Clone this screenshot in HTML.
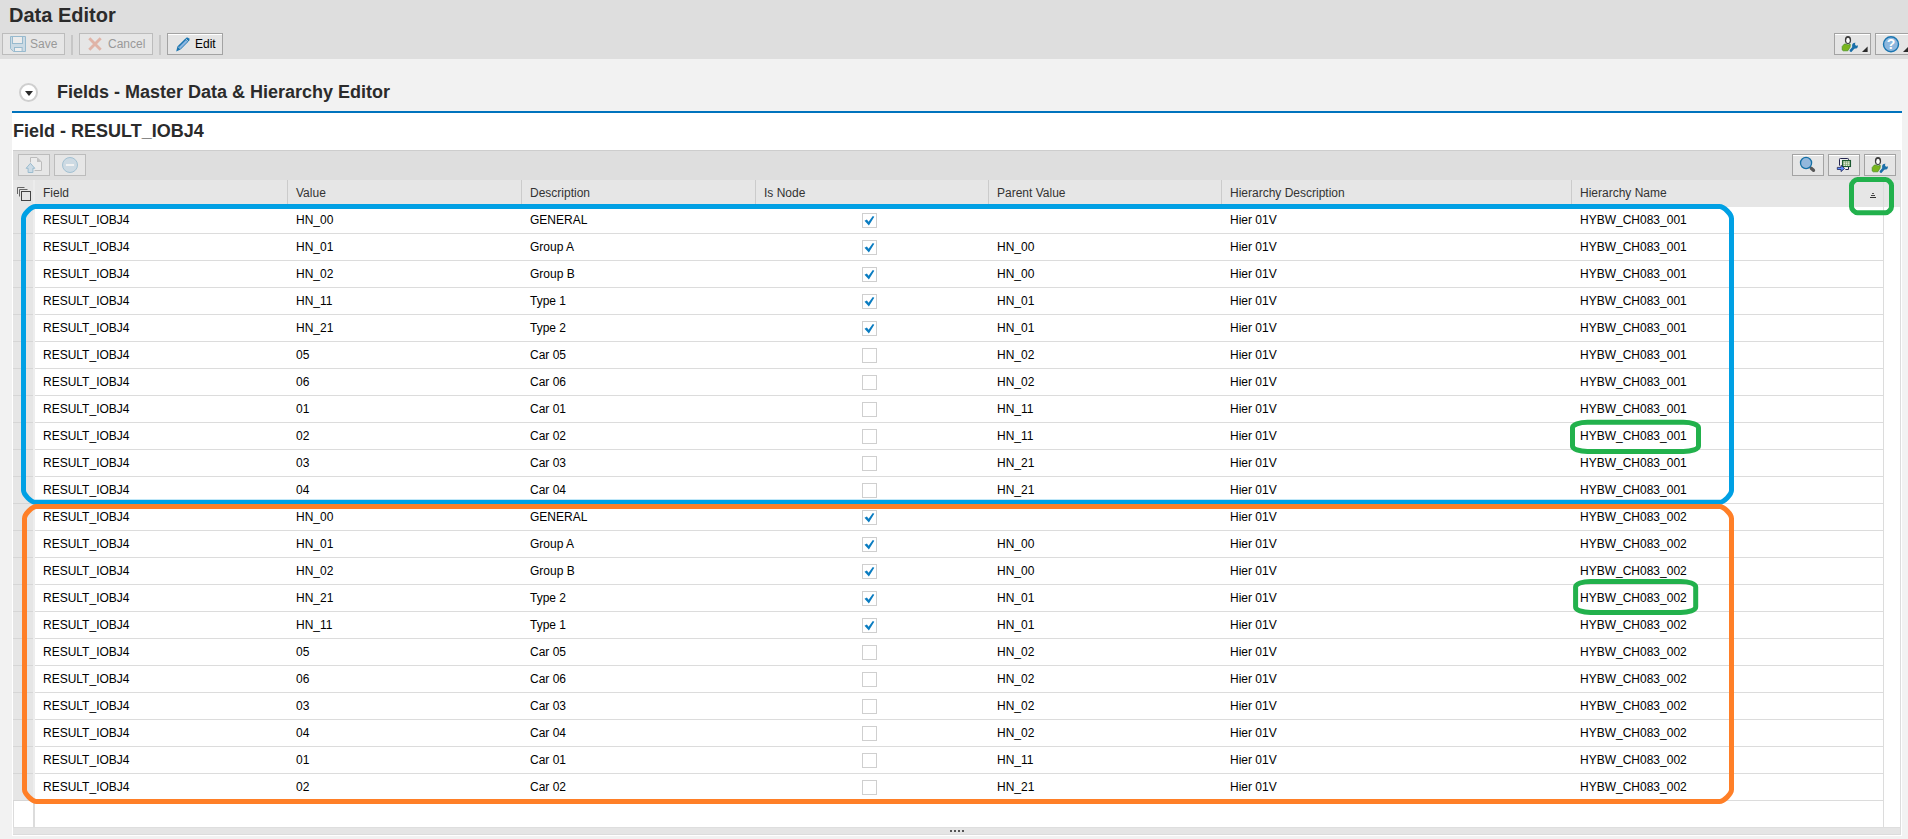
<!DOCTYPE html>
<html lang="en">
<head>
<meta charset="utf-8">
<title>Data Editor</title>
<style>
*{box-sizing:border-box;margin:0;padding:0}
html,body{width:1908px;height:839px;overflow:hidden;background:#f2f2f2;font-family:"Liberation Sans",Arial,sans-serif;font-size:12px;color:#000}
.abs{position:absolute}
#top{position:absolute;left:0;top:0;width:1908px;height:59px;background:#dedede}
#ttl{position:absolute;left:9px;top:3px;font-size:20px;font-weight:bold;color:#2b2b2b;line-height:24px;white-space:nowrap}
.btn{position:absolute;height:22px;border:1px solid #bcbcbc;background:#e6e6e6;font-size:12px;line-height:20px;white-space:nowrap;color:#999}
.btn.en{color:#000;background:#e5e5e5;border-color:#a3a3a3;box-shadow:inset 0 1px 0 #fff}
.btn svg{position:absolute;overflow:visible}
.sep{position:absolute;top:35px;width:2px;height:20px;background:#c6c6c6}
#sec{position:absolute;left:57px;top:81px;font-size:18px;font-weight:bold;color:#2b2b2b;line-height:22px;white-space:nowrap}
#circ{position:absolute;left:19px;top:83px;width:19px;height:19px;border-radius:50%;border:2px solid #cfcfcf;background:#fff}
#circ:after{content:"";position:absolute;left:3.5px;top:6px;border-left:4.5px solid transparent;border-right:4.5px solid transparent;border-top:5px solid #2b2b2b}
#bl{position:absolute;left:12px;top:111px;width:1890px;height:2px;background:#0073bd}
#panel{position:absolute;left:12px;top:113px;width:1890px;height:723px;background:#fff}
#sub{position:absolute;left:13px;top:120px;font-size:18px;font-weight:bold;color:#2b2b2b;line-height:22px;white-space:nowrap}
#tb{position:absolute;left:13px;top:150px;width:1888px;height:30px;background:#dedede;border-top:1px solid #cdcdcd}
#hd{position:absolute;left:13px;top:180px;width:1888px;height:27px;background:#e6e6e6}
#hd b{position:absolute;top:0;height:27px;line-height:26px;font-weight:normal;color:#333;padding-left:8px;border-left:1px solid #cbcbcb;white-space:nowrap}
#rows{position:absolute;left:13px;top:207px;width:1871px}
.r{position:relative;height:27px;border-bottom:1px solid #dcdcdc;background:#fff}
.r .s{position:absolute;left:0;top:0;width:20px;height:27px;background:#e6e6e6;border-right:0;border-bottom:1px solid #d6d6d6}
.r .s:after{content:"";position:absolute;left:20px;top:0;width:2px;height:27px;background:#ededed}
.c{position:absolute;top:0;height:26px;line-height:26px;font-weight:normal;white-space:nowrap;padding-left:9px}
.c1{left:21px}.c2{left:274px}.c3{left:508px}.c4{left:742px;width:233px;padding:0}.c5{left:975px}.c6{left:1208px}.c7{left:1558px}
.cb{position:absolute;left:107px;top:6px;width:15px;height:15px;border:1px solid #cfcfcf;background:#fff}
.cb svg{position:absolute;left:0;top:0}
#vline{position:absolute;left:1883px;top:180px;width:1px;height:647px;background:#dcdcdc}
#hstrip{position:absolute;left:33px;top:180px;width:2px;height:27px;background:#ececec}
#rb{position:absolute;left:1900px;top:150px;width:1px;height:685px;background:#dcdcdc}
#hs{position:absolute;left:13px;top:827px;width:1888px;height:8px;background:#e5e5e5;border-top:1px solid #dedede;border-bottom:1px solid #dcdcdc}
#dots{position:absolute;left:950px;top:830px;width:14px;height:2px;background:linear-gradient(90deg,#555 0,#555 2px,transparent 2px,transparent 4px,#555 4px,#555 6px,transparent 6px,transparent 8px,#555 8px,#555 10px,transparent 10px,transparent 12px,#555 12px,#555 14px)}
.r.e .s{background:#fff;border:0;border-left:1px solid #dcdcdc}
.r.e .s:after{background:#dcdcdc;left:19px}
</style>
</head>
<body>
<div id="top"></div>
<div id="ttl">Data Editor</div>
<div class="btn" style="left:2px;top:33px;width:63px;padding-left:27px"><svg style="left:7px;top:2px" width="16" height="16" viewBox="0 0 16 16"><path d="M0.5 0.5 H15.5 V15.5 H3.4 L0.5 12.6 Z" fill="#cbdae4" stroke="#98bace"/><rect x="2.5" y="0.5" width="10" height="7" fill="#ececec" stroke="#98bace"/><rect x="4.5" y="11.5" width="7.6" height="4" fill="#efefef" stroke="#98bace"/></svg>Save</div>
<div class="sep" style="left:71px"></div>
<div class="btn" style="left:79px;top:33px;width:74px;padding-left:28px"><svg style="left:8px;top:3px" width="14" height="14" viewBox="0 0 14 14"><path d="M1.3 1.3 L12.7 12.7 M12.7 1.3 L1.3 12.7" stroke="#e0b4a7" stroke-width="2.9" fill="none"/></svg>Cancel</div>
<div class="sep" style="left:159px"></div>
<div class="btn en" style="left:167px;top:33px;width:56px;padding-left:27px"><svg style="left:7px;top:2px" width="16" height="16" viewBox="0 0 16 16"><path d="M1.2 15.4 L2.4 10.6 L11.2 1.8 Q12.4 0.8 13.8 2.2 Q15.2 3.6 14.2 4.8 L5.6 13.6 Z" fill="#1a75b0"/><path d="M4 11 L11 4 L12.6 5.6 L5.6 12.6 Z" fill="#8db7e2"/><path d="M2.8 10.4 L5.8 13.4 M10.6 2.6 L13.6 5.6" stroke="#e5e5e5" stroke-width="0.7"/></svg>Edit</div>
<div class="btn en" style="left:1834px;top:33px;width:37px"><svg style="left:6px;top:1px" width="18" height="18" viewBox="0 0 18 18"><g>
<ellipse cx="7" cy="5" rx="3.1" ry="4" fill="#3a3a3a"/>
<ellipse cx="7" cy="5.4" rx="1.8" ry="2.55" fill="#fff"/>
<path d="M3.4 9 L1.2 11.5 V14.9 L2.2 15.8 H6.8 L9.1 12.1 L9.3 9.3 L7.1 9.9 L4.6 9 Z" fill="#7ab51d" stroke="#438f1e" stroke-width="0.7" stroke-linejoin="round"/>
<path d="M9.9 15.6 L13 12.2" stroke="#1a6fa8" stroke-width="2.6" stroke-linecap="round" fill="none"/>
<circle cx="14" cy="10.7" r="2.9" fill="#1a6fa8"/><circle cx="15.7" cy="9" r="1.75" fill="#e5e5e5"/>
</g></svg><svg style="left:26.6px;top:12.2px" width="6" height="6" viewBox="0 0 6 6"><path d="M0 6 H5.6 V0.4 Z" fill="#2b2b2b"/></svg></div>
<div class="btn en" style="left:1875px;top:33px;width:37px"><svg style="left:6px;top:1px" width="18" height="18" viewBox="0 0 18 18"><circle cx="9" cy="9.2" r="7.5" fill="#8db7de" stroke="#1a75b0" stroke-width="1.4"/><text x="9" y="13.5" text-anchor="middle" font-family="Liberation Sans, sans-serif" font-weight="bold" font-size="14" fill="#fff">?</text></svg><svg style="left:26.8px;top:12.2px" width="6" height="6" viewBox="0 0 6 6"><path d="M0 6 H6 V0 Z" fill="#2b2b2b"/></svg></div>
<div id="circ"></div>
<div id="sec">Fields - Master Data &amp; Hierarchy Editor</div>
<div id="bl"></div>
<div id="panel"></div>
<div id="sub">Field - RESULT_IOBJ4</div>
<div id="tb"></div>
<div class="btn" style="left:18px;top:154px;width:32px"><svg style="left:6px;top:2px" width="18" height="17" viewBox="0 0 18 17"><path d="M5.5 5.4 V0.5 H12 L16.5 5 V13.5 H9.6" fill="#ececec" stroke="#bcbcbc" stroke-width="1" stroke-linejoin="miter"/><path d="M12 0.5 V5 H16.5 Z" fill="#c2c2c2"/><path d="M5.45 6.3 L9.8 11.3 H7.9 V15.5 H3.1 V11.3 H1.1 Z" fill="#cddbe5" stroke="#94b8cc" stroke-width="0.9"/></svg></div>
<div class="btn" style="left:54px;top:154px;width:32px"><svg style="left:7px;top:2px" width="17" height="17" viewBox="0 0 17 17"><circle cx="8" cy="8" r="7.5" fill="#cddae3" stroke="#a3c1d2"/><rect x="3.9" y="7" width="8.2" height="2" fill="#f2f2f2"/></svg></div>
<div class="btn en" style="left:1792px;top:154px;width:32px"><svg style="left:6px;top:1px" width="18" height="18" viewBox="0 0 18 18"><path d="M12.2 12.2 L14.5 14.3" stroke="#585858" stroke-width="3.3" stroke-linecap="round"/><circle cx="7.05" cy="7" r="5.55" fill="#93b8dc" stroke="#1570a6" stroke-width="1.3"/></svg></div>
<div class="btn en" style="left:1828px;top:154px;width:32px"><svg style="left:7px;top:2px" width="18" height="18" viewBox="0 0 18 18"><path d="M3.5 8.6 V2.3 Q3.5 1.5 4.3 1.5 H11.7 Q12.5 1.5 12.5 2.3 V12.5 H9.4" fill="#f6f6f6" stroke="#25254f" stroke-width="1"/><rect x="6.5" y="3.5" width="8" height="6" fill="#7fa870" stroke="#1c5a32" stroke-width="1.1"/><path d="M7.6 5 H9.2 M9.9 5 H11.2 M11.9 5 H13.4 M7.6 6.7 H9.2 M9.9 6.7 H11.2 M11.9 6.7 H13.4 M7.6 8.3 H9.2 M9.9 8.3 H11.2 M11.9 8.3 H13.4" stroke="#fff" stroke-width="0.9"/><path d="M1.3 10.4 H5 V8.3 L8.6 11.4 L5 14.6 V12.5 H1.3 Z" fill="#5f8fff" stroke="#1e2355" stroke-width="0.8" stroke-linejoin="round"/></svg></div>
<div class="btn en" style="left:1864px;top:154px;width:32px"><svg style="left:6px;top:1px" width="18" height="18" viewBox="0 0 18 18"><g>
<ellipse cx="7" cy="5" rx="3.1" ry="4" fill="#3a3a3a"/>
<ellipse cx="7" cy="5.4" rx="1.8" ry="2.55" fill="#fff"/>
<path d="M3.4 9 L1.2 11.5 V14.9 L2.2 15.8 H6.8 L9.1 12.1 L9.3 9.3 L7.1 9.9 L4.6 9 Z" fill="#7ab51d" stroke="#438f1e" stroke-width="0.7" stroke-linejoin="round"/>
<path d="M9.9 15.6 L13 12.2" stroke="#1a6fa8" stroke-width="2.6" stroke-linecap="round" fill="none"/>
<circle cx="14" cy="10.7" r="2.9" fill="#1a6fa8"/><circle cx="15.7" cy="9" r="1.75" fill="#e5e5e5"/>
</g></svg></div>
<div id="hd">
<b style="left:21px;border-left:0;padding-left:9px">Field</b><b style="left:274px">Value</b><b style="left:508px">Description</b><b style="left:742px">Is Node</b><b style="left:975px">Parent Value</b><b style="left:1208px">Hierarchy Description</b><b style="left:1558px">Hierarchy Name</b>
</div>
<div id="rows">
<div class="r"><i class="s"></i><b class="c c1">RESULT_IOBJ4</b><b class="c c2">HN_00</b><b class="c c3">GENERAL</b><b class="c c4"><span class="cb on"><svg viewBox="0 0 13 13" width="13" height="13"><path d="M1.5 6.8 L3.9 5.4 L5.6 7.8 L9.8 2 L11.3 2.8 L5.9 11.5 Z" fill="#0a7cc1"/></svg></span></b><b class="c c5"></b><b class="c c6">Hier 01V</b><b class="c c7">HYBW_CH083_001</b></div>
<div class="r"><i class="s"></i><b class="c c1">RESULT_IOBJ4</b><b class="c c2">HN_01</b><b class="c c3">Group A</b><b class="c c4"><span class="cb on"><svg viewBox="0 0 13 13" width="13" height="13"><path d="M1.5 6.8 L3.9 5.4 L5.6 7.8 L9.8 2 L11.3 2.8 L5.9 11.5 Z" fill="#0a7cc1"/></svg></span></b><b class="c c5">HN_00</b><b class="c c6">Hier 01V</b><b class="c c7">HYBW_CH083_001</b></div>
<div class="r"><i class="s"></i><b class="c c1">RESULT_IOBJ4</b><b class="c c2">HN_02</b><b class="c c3">Group B</b><b class="c c4"><span class="cb on"><svg viewBox="0 0 13 13" width="13" height="13"><path d="M1.5 6.8 L3.9 5.4 L5.6 7.8 L9.8 2 L11.3 2.8 L5.9 11.5 Z" fill="#0a7cc1"/></svg></span></b><b class="c c5">HN_00</b><b class="c c6">Hier 01V</b><b class="c c7">HYBW_CH083_001</b></div>
<div class="r"><i class="s"></i><b class="c c1">RESULT_IOBJ4</b><b class="c c2">HN_11</b><b class="c c3">Type 1</b><b class="c c4"><span class="cb on"><svg viewBox="0 0 13 13" width="13" height="13"><path d="M1.5 6.8 L3.9 5.4 L5.6 7.8 L9.8 2 L11.3 2.8 L5.9 11.5 Z" fill="#0a7cc1"/></svg></span></b><b class="c c5">HN_01</b><b class="c c6">Hier 01V</b><b class="c c7">HYBW_CH083_001</b></div>
<div class="r"><i class="s"></i><b class="c c1">RESULT_IOBJ4</b><b class="c c2">HN_21</b><b class="c c3">Type 2</b><b class="c c4"><span class="cb on"><svg viewBox="0 0 13 13" width="13" height="13"><path d="M1.5 6.8 L3.9 5.4 L5.6 7.8 L9.8 2 L11.3 2.8 L5.9 11.5 Z" fill="#0a7cc1"/></svg></span></b><b class="c c5">HN_01</b><b class="c c6">Hier 01V</b><b class="c c7">HYBW_CH083_001</b></div>
<div class="r"><i class="s"></i><b class="c c1">RESULT_IOBJ4</b><b class="c c2">05</b><b class="c c3">Car 05</b><b class="c c4"><span class="cb"></span></b><b class="c c5">HN_02</b><b class="c c6">Hier 01V</b><b class="c c7">HYBW_CH083_001</b></div>
<div class="r"><i class="s"></i><b class="c c1">RESULT_IOBJ4</b><b class="c c2">06</b><b class="c c3">Car 06</b><b class="c c4"><span class="cb"></span></b><b class="c c5">HN_02</b><b class="c c6">Hier 01V</b><b class="c c7">HYBW_CH083_001</b></div>
<div class="r"><i class="s"></i><b class="c c1">RESULT_IOBJ4</b><b class="c c2">01</b><b class="c c3">Car 01</b><b class="c c4"><span class="cb"></span></b><b class="c c5">HN_11</b><b class="c c6">Hier 01V</b><b class="c c7">HYBW_CH083_001</b></div>
<div class="r"><i class="s"></i><b class="c c1">RESULT_IOBJ4</b><b class="c c2">02</b><b class="c c3">Car 02</b><b class="c c4"><span class="cb"></span></b><b class="c c5">HN_11</b><b class="c c6">Hier 01V</b><b class="c c7">HYBW_CH083_001</b></div>
<div class="r"><i class="s"></i><b class="c c1">RESULT_IOBJ4</b><b class="c c2">03</b><b class="c c3">Car 03</b><b class="c c4"><span class="cb"></span></b><b class="c c5">HN_21</b><b class="c c6">Hier 01V</b><b class="c c7">HYBW_CH083_001</b></div>
<div class="r"><i class="s"></i><b class="c c1">RESULT_IOBJ4</b><b class="c c2">04</b><b class="c c3">Car 04</b><b class="c c4"><span class="cb"></span></b><b class="c c5">HN_21</b><b class="c c6">Hier 01V</b><b class="c c7">HYBW_CH083_001</b></div>
<div class="r"><i class="s"></i><b class="c c1">RESULT_IOBJ4</b><b class="c c2">HN_00</b><b class="c c3">GENERAL</b><b class="c c4"><span class="cb on"><svg viewBox="0 0 13 13" width="13" height="13"><path d="M1.5 6.8 L3.9 5.4 L5.6 7.8 L9.8 2 L11.3 2.8 L5.9 11.5 Z" fill="#0a7cc1"/></svg></span></b><b class="c c5"></b><b class="c c6">Hier 01V</b><b class="c c7">HYBW_CH083_002</b></div>
<div class="r"><i class="s"></i><b class="c c1">RESULT_IOBJ4</b><b class="c c2">HN_01</b><b class="c c3">Group A</b><b class="c c4"><span class="cb on"><svg viewBox="0 0 13 13" width="13" height="13"><path d="M1.5 6.8 L3.9 5.4 L5.6 7.8 L9.8 2 L11.3 2.8 L5.9 11.5 Z" fill="#0a7cc1"/></svg></span></b><b class="c c5">HN_00</b><b class="c c6">Hier 01V</b><b class="c c7">HYBW_CH083_002</b></div>
<div class="r"><i class="s"></i><b class="c c1">RESULT_IOBJ4</b><b class="c c2">HN_02</b><b class="c c3">Group B</b><b class="c c4"><span class="cb on"><svg viewBox="0 0 13 13" width="13" height="13"><path d="M1.5 6.8 L3.9 5.4 L5.6 7.8 L9.8 2 L11.3 2.8 L5.9 11.5 Z" fill="#0a7cc1"/></svg></span></b><b class="c c5">HN_00</b><b class="c c6">Hier 01V</b><b class="c c7">HYBW_CH083_002</b></div>
<div class="r"><i class="s"></i><b class="c c1">RESULT_IOBJ4</b><b class="c c2">HN_21</b><b class="c c3">Type 2</b><b class="c c4"><span class="cb on"><svg viewBox="0 0 13 13" width="13" height="13"><path d="M1.5 6.8 L3.9 5.4 L5.6 7.8 L9.8 2 L11.3 2.8 L5.9 11.5 Z" fill="#0a7cc1"/></svg></span></b><b class="c c5">HN_01</b><b class="c c6">Hier 01V</b><b class="c c7">HYBW_CH083_002</b></div>
<div class="r"><i class="s"></i><b class="c c1">RESULT_IOBJ4</b><b class="c c2">HN_11</b><b class="c c3">Type 1</b><b class="c c4"><span class="cb on"><svg viewBox="0 0 13 13" width="13" height="13"><path d="M1.5 6.8 L3.9 5.4 L5.6 7.8 L9.8 2 L11.3 2.8 L5.9 11.5 Z" fill="#0a7cc1"/></svg></span></b><b class="c c5">HN_01</b><b class="c c6">Hier 01V</b><b class="c c7">HYBW_CH083_002</b></div>
<div class="r"><i class="s"></i><b class="c c1">RESULT_IOBJ4</b><b class="c c2">05</b><b class="c c3">Car 05</b><b class="c c4"><span class="cb"></span></b><b class="c c5">HN_02</b><b class="c c6">Hier 01V</b><b class="c c7">HYBW_CH083_002</b></div>
<div class="r"><i class="s"></i><b class="c c1">RESULT_IOBJ4</b><b class="c c2">06</b><b class="c c3">Car 06</b><b class="c c4"><span class="cb"></span></b><b class="c c5">HN_02</b><b class="c c6">Hier 01V</b><b class="c c7">HYBW_CH083_002</b></div>
<div class="r"><i class="s"></i><b class="c c1">RESULT_IOBJ4</b><b class="c c2">03</b><b class="c c3">Car 03</b><b class="c c4"><span class="cb"></span></b><b class="c c5">HN_02</b><b class="c c6">Hier 01V</b><b class="c c7">HYBW_CH083_002</b></div>
<div class="r"><i class="s"></i><b class="c c1">RESULT_IOBJ4</b><b class="c c2">04</b><b class="c c3">Car 04</b><b class="c c4"><span class="cb"></span></b><b class="c c5">HN_02</b><b class="c c6">Hier 01V</b><b class="c c7">HYBW_CH083_002</b></div>
<div class="r"><i class="s"></i><b class="c c1">RESULT_IOBJ4</b><b class="c c2">01</b><b class="c c3">Car 01</b><b class="c c4"><span class="cb"></span></b><b class="c c5">HN_11</b><b class="c c6">Hier 01V</b><b class="c c7">HYBW_CH083_002</b></div>
<div class="r"><i class="s"></i><b class="c c1">RESULT_IOBJ4</b><b class="c c2">02</b><b class="c c3">Car 02</b><b class="c c4"><span class="cb"></span></b><b class="c c5">HN_21</b><b class="c c6">Hier 01V</b><b class="c c7">HYBW_CH083_002</b></div><div class="r e" style="border-bottom:0"><i class="s"></i></div>
</div>
<div id="vline"></div><div id="hstrip"></div>
<div id="hs"></div><div id="dots"></div>
<div id="rb"></div>
<svg class="abs" style="left:16px;top:186px" width="16" height="16" viewBox="0 0 16 16"><path d="M1.5 8 V1.5 H8.5 M3.5 10.5 V3.5 H11.5" fill="none" stroke="#666" stroke-width="1"/><rect x="5.5" y="5.5" width="9" height="9" fill="none" stroke="#444" stroke-width="1"/></svg>
<svg class="abs" style="left:1869px;top:191px" width="8" height="8" viewBox="0 0 8 8"><rect x="3" y="2" width="2" height="1" fill="#555"/><rect x="2" y="4" width="4" height="1" fill="#444"/><rect x="1" y="6" width="6" height="1" fill="#333"/></svg>
<svg class="abs" style="left:0;top:0" width="1908" height="839" viewBox="0 0 1908 839">
<path d="M35.5 206.5 H1719.5 C1723.82 206.5 1731.5 214.18 1731.5 218.5 V490.3 C1731.5 494.62 1723.82 502.3 1719.5 502.3 H35.5 C31.18 502.3 23.5 494.62 23.5 490.3 V218.5 C23.5 214.18 31.18 206.5 35.5 206.5 Z" fill="none" stroke="#00a0e4" stroke-width="5"/>
<path d="M36.5 506.5 H1719.5 C1723.82 506.5 1731.5 514.18 1731.5 518.5 V789.5 C1731.5 793.82 1723.82 801.5 1719.5 801.5 H36.5 C32.18 801.5 24.5 793.82 24.5 789.5 V518.5 C24.5 514.18 32.18 506.5 36.5 506.5 Z" fill="none" stroke="#ff7f27" stroke-width="5"/>
<path d="M1857.5 179.6 H1885.5 C1888.2 179.6 1891.5 182.9 1891.5 185.6 V206.8 C1891.5 209.5 1888.2 212.8 1885.5 212.8 H1857.5 C1854.8 212.8 1851.5 209.5 1851.5 206.8 V185.6 C1851.5 182.9 1854.8 179.6 1857.5 179.6 Z" fill="none" stroke="#22b14c" stroke-width="5"/>
<rect x="1572.5" y="422.3" width="126" height="29.2" rx="15" ry="5.5" fill="none" stroke="#22b14c" stroke-width="5"/>
<rect x="1575.6" y="581.4" width="120.1" height="31.1" rx="15" ry="5.5" fill="none" stroke="#22b14c" stroke-width="5"/>
</svg>
</body>
</html>
